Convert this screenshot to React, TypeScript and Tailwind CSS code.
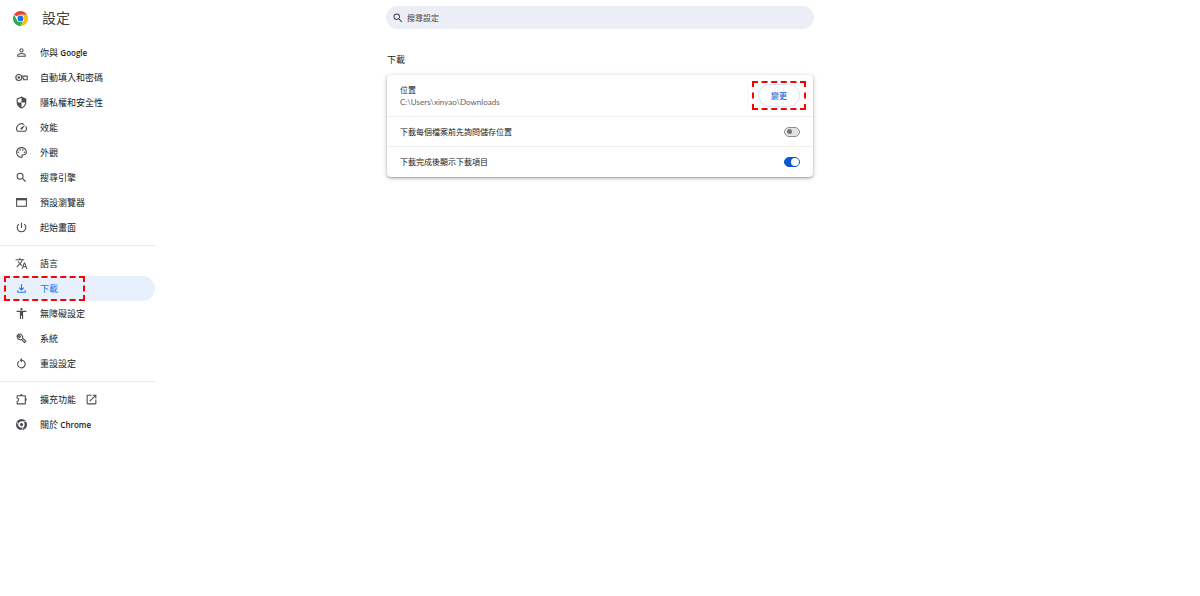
import { useState } from "react";
import type { ComponentType, ReactNode } from "react";
import clsx from "clsx";
import {
  MdAccessibility,
  MdOpenInNew,
  MdOutlineFileDownload,
  MdOutlinePalette,
  MdOutlineSpeed,
  MdPersonOutline,
  MdPowerSettingsNew,
  MdSearch,
  MdSecurity,
  MdTranslate,
} from "react-icons/md";

type IconProps = { className?: string };

type MenuItem = {
  id: string;
  label: ReactNode;
  icon: ComponentType<IconProps>;
  external?: boolean;
};

function ChromeLogo({ className }: IconProps) {
  return (
    <svg viewBox="0 0 48 48" className={className} aria-hidden="true">
      <path fill="#ea4335" d="M24 24 3.22 12A24 24 0 0 1 44.78 12H24z" />
      <path fill="#34a853" d="M3.22 12A24 24 0 0 0 24 48L34.39 30 24 24 13.61 30z" />
      <path fill="#fbbc04" d="M44.78 12A24 24 0 0 1 24 48L34.39 30 24 24V12z" />
      <circle cx="24" cy="24" r="12" fill="#fff" />
      <circle cx="24" cy="24" r="9.5" fill="#1a73e8" />
    </svg>
  );
}

function ChromeIcon({ className }: IconProps) {
  return (
    <svg viewBox="0 0 24 24" className={className} aria-hidden="true">
      <circle cx="12" cy="12" r="8" fill="none" stroke="currentColor" strokeWidth="4.5" />
      <circle cx="12" cy="12" r="3" fill="currentColor" />
      <path
        d="M12 6.8h9.8M7.5 14.6 2.6 6.1M16.5 14.6l-4.9 8.5"
        fill="none"
        stroke="#fff"
        strokeWidth="1.4"
      />
    </svg>
  );
}

function KeyIcon({ className }: IconProps) {
  return (
    <svg viewBox="0 0 24 24" className={className} aria-hidden="true">
      <g fill="none" stroke="currentColor" strokeWidth="2">
        <circle cx="7" cy="12" r="5.5" />
        <path d="M12 9.5h10.5V16H16v-3h-4" />
      </g>
      <circle cx="7" cy="12" r="2.4" fill="currentColor" />
    </svg>
  );
}

function WindowIcon({ className }: IconProps) {
  return (
    <svg viewBox="0 0 24 24" className={className} aria-hidden="true">
      <rect x="3" y="5" width="18" height="14" fill="none" stroke="currentColor" strokeWidth="2" />
      <path d="M2 4h20v4H2z" fill="currentColor" />
    </svg>
  );
}

function WrenchIcon({ className }: IconProps) {
  return (
    <svg viewBox="0 0 24 24" className={className} aria-hidden="true">
      <path
        d="M6 4.2 10.2 8.4 8.4 10.2 4.2 6A6 6 0 0 0 12 13.8L17.5 19.5l2.5-2.5L14 11.5A6 6 0 0 0 6 4.2z"
        fill="none"
        stroke="currentColor"
        strokeWidth="2"
        strokeLinejoin="round"
      />
    </svg>
  );
}

function ResetIcon({ className }: IconProps) {
  return (
    <svg viewBox="0 0 24 24" className={className} aria-hidden="true">
      <path d="M7.5 7.5A7 7 0 1 0 12 6" fill="none" stroke="currentColor" strokeWidth="2" />
      <path d="M13 2v8L8.5 6z" fill="currentColor" />
    </svg>
  );
}

function ExtensionIcon({ className }: IconProps) {
  return (
    <svg viewBox="0 0 24 24" className={className} aria-hidden="true">
      <path
        d="M4 5h15v15H4v-4.7a2.8 2.8 0 0 0 0-5.6z"
        fill="none"
        stroke="currentColor"
        strokeWidth="2"
        strokeLinejoin="round"
      />
      <path d="M8.8 5a2.7 2.7 0 0 1 5.4 0zM19 9.8a2.7 2.7 0 0 1 0 5.4z" fill="currentColor" />
    </svg>
  );
}

const menuGroups: MenuItem[][] = [
  [
    {
      id: "people",
      label: (
        <>
          你與 <span className="text-[8px] font-semibold">Google</span>
        </>
      ),
      icon: MdPersonOutline,
    },
    { id: "autofill", label: "自動填入和密碼", icon: KeyIcon },
    { id: "privacy", label: "隱私權和安全性", icon: MdSecurity },
    { id: "performance", label: "效能", icon: MdOutlineSpeed },
    { id: "appearance", label: "外觀", icon: MdOutlinePalette },
    { id: "search", label: "搜尋引擎", icon: MdSearch },
    { id: "defaultBrowser", label: "預設瀏覽器", icon: WindowIcon },
    { id: "onStartup", label: "起始畫面", icon: MdPowerSettingsNew },
  ],
  [
    { id: "languages", label: "語言", icon: MdTranslate },
    { id: "downloads", label: "下載", icon: MdOutlineFileDownload },
    { id: "accessibility", label: "無障礙設定", icon: MdAccessibility },
    { id: "system", label: "系統", icon: WrenchIcon },
    { id: "reset", label: "重設設定", icon: ResetIcon },
  ],
  [
    { id: "extensions", label: "擴充功能", icon: ExtensionIcon, external: true },
    {
      id: "help",
      label: (
        <>
          關於 <span className="text-[8px] font-semibold">Chrome</span>
        </>
      ),
      icon: ChromeIcon,
    },
  ],
];

function MenuLink({ item, active }: { item: MenuItem; active: boolean }) {
  const Icon = item.icon;

  return (
    <li className="relative">
      <a
        href={`#${item.id}`}
        aria-current={active ? "page" : undefined}
        className={clsx(
          "flex h-[25px] items-center rounded-r-full pl-[15px] text-[9px]",
          active ? "bg-[#e8f0fe] text-[#1a73e8]" : "text-[#202124]"
        )}
      >
        <Icon className={clsx("size-[13px] shrink-0", !active && "text-[#4a4d51]")} />
        <span className="ml-3">{item.label}</span>
        {item.external && <MdOpenInNew className="ml-[9px] size-[13px] text-[#4a4d51]" />}
      </a>
      {active && (
        <span className="pointer-events-none absolute inset-y-0 left-1 w-[81px] border-2 border-dashed border-[#ff0000]" />
      )}
    </li>
  );
}

function Sidebar() {
  return (
    <aside>
      <header className="flex h-9 items-center gap-3.5 pl-[13px]">
        <ChromeLogo className="size-[15px]" />
        <h1 className="text-sm text-[#3c4043]">設定</h1>
      </header>
      <nav className="pt-1">
        {menuGroups.map((group, i) => (
          <ul key={i} className={clsx(i > 0 && "mt-[5px] border-t border-[#e8eaed] pt-[5px]")}>
            {group.map((item) => (
              <MenuLink key={item.id} item={item} active={item.id === "downloads"} />
            ))}
          </ul>
        ))}
      </nav>
    </aside>
  );
}

function SettingRow({ children }: { children: ReactNode }) {
  return (
    <div className="flex min-h-[30px] items-center justify-between px-[13px] text-[8px] text-[#202124]">
      {children}
    </div>
  );
}

function ToggleRow({ id, label, initial }: { id: string; label: string; initial: boolean }) {
  const [checked, setChecked] = useState(initial);

  return (
    <SettingRow>
      <label htmlFor={id}>{label}</label>
      <input
        id={id}
        type="checkbox"
        role="switch"
        checked={checked}
        onChange={(e) => setChecked(e.target.checked)}
        className="flex h-[10px] w-4 appearance-none items-center rounded-full border border-[#8e918f] bg-[#e3e3e3] px-0.5 before:size-[5px] before:rounded-full before:bg-[#747775] checked:justify-end checked:border-[#0b57d0] checked:bg-[#0b57d0] checked:px-0 checked:before:size-2 checked:before:bg-white"
      />
    </SettingRow>
  );
}

export default function App() {
  return (
    <div
      lang="zh-Hant"
      className="grid min-h-screen grid-cols-[155px_1fr_155px] bg-white font-['Open_Sans','Noto_Sans_CJK_TC',sans-serif]"
    >
      <Sidebar />
      <main className="mx-auto w-full max-w-[428px]">
        <div className="mt-1.5 flex h-[23px] items-center gap-[3px] rounded-full bg-[#ebeef7] px-1.5">
          <MdSearch className="size-3 shrink-0 text-[#474747]" />
          <input
            type="text"
            aria-label="搜尋設定"
            placeholder="搜尋設定"
            className="min-w-0 flex-1 bg-transparent text-[8px] text-[#474747] outline-none placeholder:text-[#474747]"
          />
        </div>

        <section className="mx-px mt-6">
          <h2 className="text-[9px] leading-3.5 text-[#202124]">下載</h2>
          <div className="mt-2 divide-y divide-[#eeeeee] rounded shadow-[0_1px_2px_rgba(60,64,67,0.4),0_1px_4px_1px_rgba(60,64,67,0.18)]">
            <SettingRow>
              <div className="leading-3">
                <div>位置</div>
                <div className="font-['Lato',sans-serif] text-[#5f6368]">
                  C:\Users\xinyao\Downloads
                </div>
              </div>
              <div className="flex h-[41px] items-center gap-[9px]">
                <span className="h-5 w-px bg-[#f1f3f4]" />
                <div className="relative">
                  <button
                    type="button"
                    className="h-[23px] w-[42px] rounded-full border border-[#d2e3fc] text-[8px] font-medium text-[#1967d2]"
                  >
                    變更
                  </button>
                  <span className="pointer-events-none absolute -inset-x-1.5 -inset-y-[3px] border-2 border-dashed border-[#ff0000]" />
                </div>
              </div>
            </SettingRow>
            <ToggleRow id="ask-location" label="下載每個檔案前先詢問儲存位置" initial={false} />
            <ToggleRow id="show-finished" label="下載完成後顯示下載項目" initial={true} />
          </div>
        </section>
      </main>
    </div>
  );
}
